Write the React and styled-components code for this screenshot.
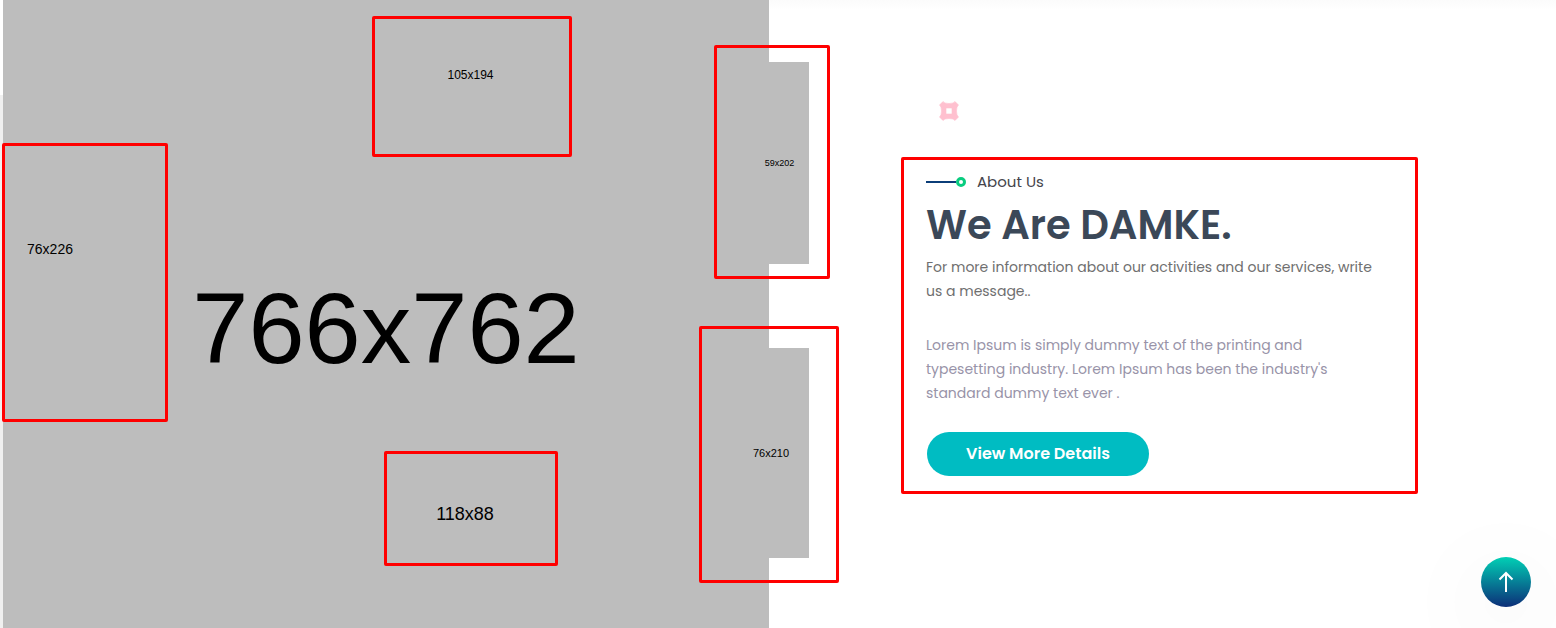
import React from 'react';
import styled, { createGlobalStyle } from 'styled-components';

const GlobalStyle = createGlobalStyle`
  *, *::before, *::after { box-sizing: border-box; }
  body {
    margin: 0;
    background: #ffffff;
    font-family: Poppins, Inter, sans-serif;
    overflow-x: hidden;
  }
  h2, p { margin: 0; }
`;

const Hero = styled.main`
  display: grid;
  grid-template-columns: minmax(0, 766fr) minmax(0, 787fr);
  min-height: 100vh;
  padding-left: 3px;
  background: linear-gradient(#ffffff 95px, #f0f0f0 95px);
`;

const Media = styled.section`
  position: relative;
  padding-top: 270px;
  background: #bdbdbd;
  color: #000000;
  font-family: "Liberation Sans", Arial, sans-serif;
  text-align: center;
`;

const MediaSize = styled.div`
  font-size: 101px;
  line-height: 116px;
`;

const Tile = styled.div`
  position: absolute;
  left: ${(p) => p.$x}px;
  top: ${(p) => p.$y}px;
  width: ${(p) => p.$w}px;
  height: ${(p) => p.$h}px;
  display: flex;
  align-items: center;
  justify-content: center;
  background: #bdbdbd;
  font-size: ${(p) => p.$size}px;
`;

const Marker = styled.div`
  position: absolute;
  left: ${(p) => p.$x}px;
  top: ${(p) => p.$y}px;
  width: ${(p) => p.$w}px;
  height: ${(p) => p.$h}px;
  border: 3px solid #ff0000;
  border-radius: 2px;
`;

const Content = styled.section`
  display: flex;
  flex-direction: column;
  align-items: flex-start;
  padding: 101px 138px 0 132px;
  background: linear-gradient(#fbfbfb, #ffffff 10px);
`;

const Ornament = styled.svg`
  width: 20px;
  height: 20px;
  margin: 0 0 36px 38px;
`;

const About = styled.article`
  align-self: stretch;
  padding: 12px 22px 15px;
  border: 3px solid #ff0000;
  border-radius: 2px;
`;

const Eyebrow = styled.div`
  display: flex;
  align-items: center;
  gap: 11px;
  color: #45454c;
  font-size: 15px;
  font-weight: 400;
  line-height: 20px;
`;

const Pin = styled.span`
  display: flex;
  align-items: center;

  &::before {
    content: "";
    width: 30px;
    height: 2px;
    background: #0b3d78;
  }

  &::after {
    content: "";
    width: 10px;
    height: 10px;
    border: 3px solid #09cc7f;
    border-radius: 50%;
  }
`;

const Title = styled.h2`
  margin-top: 9px;
  color: #3b4858;
  font-size: 40px;
  font-weight: 600;
  line-height: 48px;
  white-space: nowrap;
`;

const Text = styled.p`
  margin-top: ${(p) => p.$gap}px;
  color: ${(p) => p.$color};
  font-size: 14px;
  line-height: 24px;
  white-space: nowrap;
`;

const DetailsButton = styled.button`
  display: block;
  width: 222px;
  height: 44px;
  margin: 27px 0 0 1px;
  padding: 0 0 2px;
  border: 0;
  border-radius: 22px;
  background: #00bcc2;
  color: #ffffff;
  font: inherit;
  font-size: 16px;
  font-weight: 600;
  cursor: pointer;
`;

const ToTop = styled.button`
  position: fixed;
  right: 25px;
  bottom: 21px;
  display: flex;
  align-items: center;
  justify-content: center;
  width: 50px;
  height: 50px;
  padding: 0;
  border: 0;
  border-radius: 50%;
  background: linear-gradient(#01d0b5, #0c2e78);
  box-shadow: 0 20px 90px 20px rgba(0, 0, 0, 0.03);
  cursor: pointer;
`;

const tiles = [
  { x: 415, y: -22, w: 105, h: 194, size: 12 },
  { x: 9, y: 136, w: 76, h: 226, size: 14 },
  { x: 747, y: 62, w: 59, h: 202, size: 9 },
  { x: 730, y: 348, w: 76, h: 210, size: 11 },
  { x: 403, y: 470, w: 118, h: 88, size: 18 },
];

const markers = [
  { x: 369, y: 16, w: 200, h: 141 },
  { x: -1, y: 143, w: 166, h: 279 },
  { x: 711, y: 45, w: 116, h: 234 },
  { x: 696, y: 326, w: 140, h: 257 },
  { x: 381, y: 451, w: 174, h: 115 },
];

export default function App() {
  return (
    <>
      <GlobalStyle />
      <Hero>
        <Media>
          <MediaSize>766x762</MediaSize>
          {tiles.map((t) => (
            <Tile key={t.y} $x={t.x} $y={t.y} $w={t.w} $h={t.h} $size={t.size}>
              {t.w}x{t.h}
            </Tile>
          ))}
          {markers.map((m) => (
            <Marker key={m.y} $x={m.x} $y={m.y} $w={m.w} $h={m.h} />
          ))}
        </Media>
        <Content>
          <Ornament viewBox="0 0 20 20" aria-hidden="true">
            <path
              d="M4 0.5Q5 2.5 10 2.5Q15 2.5 16 0.5L19.5 4Q17.5 5.5 17.5 10Q17.5 14.5 19.5 16L16 19.5Q15 17.5 10 17.5Q5 17.5 4 19.5L0.5 16Q2.5 14.5 2.5 10Q2.5 5.5 0.5 4ZM7 7V13H13V7Z"
              fill="#ffc0cf"
              fillRule="evenodd"
              stroke="#ffc0cf"
              strokeWidth="0.6"
              strokeLinejoin="round"
            />
          </Ornament>
          <About>
            <Eyebrow>
              <Pin />
              About Us
            </Eyebrow>
            <Title>We Are DAMKE.</Title>
            <Text $gap={6} $color="#6f6f6f">
              For more information about our activities and our services, write
              <br />
              us a message..
            </Text>
            <Text $gap={30} $color="#9893a8">
              Lorem Ipsum is simply dummy text of the printing and
              <br />
              typesetting industry. Lorem Ipsum has been the industry's
              <br />
              standard dummy text ever .
            </Text>
            <DetailsButton type="button">View More Details</DetailsButton>
          </About>
        </Content>
      </Hero>
      <ToTop type="button" aria-label="Back to top">
        <svg width="16" height="22" viewBox="0 0 16 22" fill="none" stroke="#ffffff" strokeWidth="2">
          <path d="M8 21V2M1.5 8.5L8 2L14.5 8.5" />
        </svg>
      </ToTop>
    </>
  );
}
